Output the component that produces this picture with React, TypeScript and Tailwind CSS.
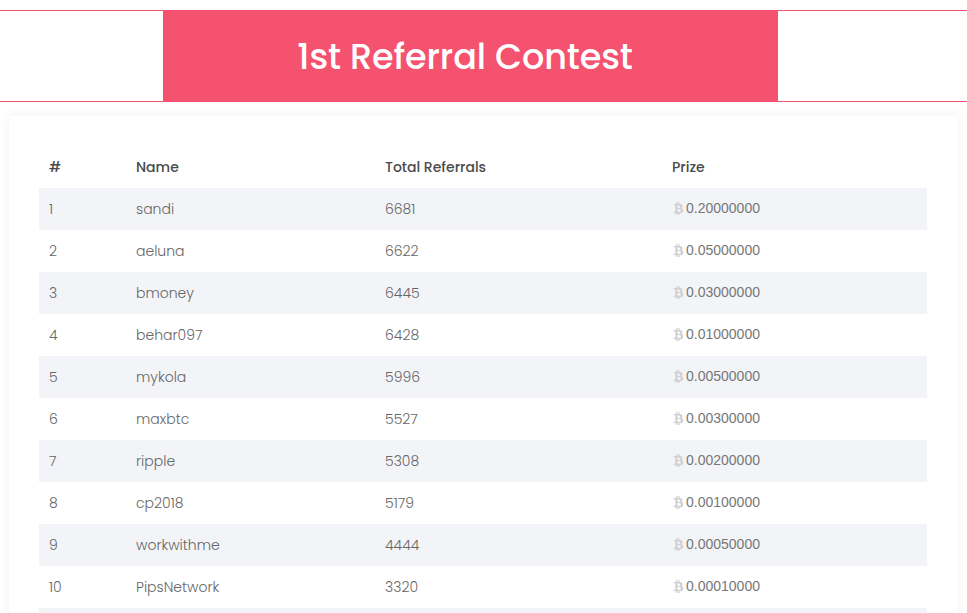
import { FaBtc } from "react-icons/fa";

const rows = [
    { name: "sandi", refs: 6681, prize: "0.20000000" },
    { name: "aeluna", refs: 6622, prize: "0.05000000" },
    { name: "bmoney", refs: 6445, prize: "0.03000000" },
    { name: "behar097", refs: 6428, prize: "0.01000000" },
    { name: "mykola", refs: 5996, prize: "0.00500000" },
    { name: "maxbtc", refs: 5527, prize: "0.00300000" },
    { name: "ripple", refs: 5308, prize: "0.00200000" },
    { name: "cp2018", refs: 5179, prize: "0.00100000" },
    { name: "workwithme", refs: 4444, prize: "0.00050000" },
    { name: "PipsNetwork", refs: 3320, prize: "0.00010000" },
];

export default function App() {
    return (
        <div className="bg-white min-h-screen font-['Poppins','Inter',sans-serif]">
            <div className="pt-[10px]">
                <div className="flex border-y border-[#f4526e] h-[92px]">
                    <div className="w-[163px]" />
                    <div className="w-[615px] bg-[#f4526e] -mt-px -mb-px flex items-center justify-center pr-[11px]">
                        <h1 className="text-white text-[35px] font-medium tracking-[-0.1px] pt-[2px]">1st Referral Contest</h1>
                    </div>
                    <div className="flex-1" />
                </div>
            </div>

            <div className="mx-[9px] mt-[14px] bg-white shadow-[0_0_12px_rgba(0,0,0,0.06)] pl-[30px] pr-[31px] pt-[30px]">
                <table className="w-full border-collapse text-[14px]">
                    <thead>
                        <tr className="h-[42px] text-left text-[#4a4a4a]">
                            <th className="font-medium pl-[10px] w-[87px]">#</th>
                            <th className="font-medium pl-[10px] w-[249px]">Name</th>
                            <th className="font-medium pl-[10px] w-[287px]">Total Referrals</th>
                            <th className="font-medium pl-[10px]">Prize</th>
                        </tr>
                    </thead>
                    <tbody>
                        {rows.map((r, i) => (
                            <tr key={i} className={i % 2 === 0 ? "h-[42px] bg-[#f3f4f8]" : "h-[42px] bg-white"}>
                                <td className="pl-[10px] font-light text-[#666]">{i + 1}</td>
                                <td className="pl-[10px] font-light text-[#666]">{r.name}</td>
                                <td className="pl-[10px] font-light text-[#666]">{r.refs}</td>
                                <td className="pl-[10px] text-[#777]">
                                    <span className="inline-flex items-center gap-[1px] font-['Liberation_Sans',sans-serif] text-[14px] font-normal">
                                        <FaBtc className="text-[#d0d0d0] w-[13px] h-[13px]" />
                                        {r.prize}
                                    </span>
                                </td>
                            </tr>
                        ))}
                        <tr className="h-[42px] bg-[#f3f4f8]">
                            <td />
                            <td />
                            <td />
                            <td />
                        </tr>
                    </tbody>
                </table>
            </div>
        </div>
    );
}
